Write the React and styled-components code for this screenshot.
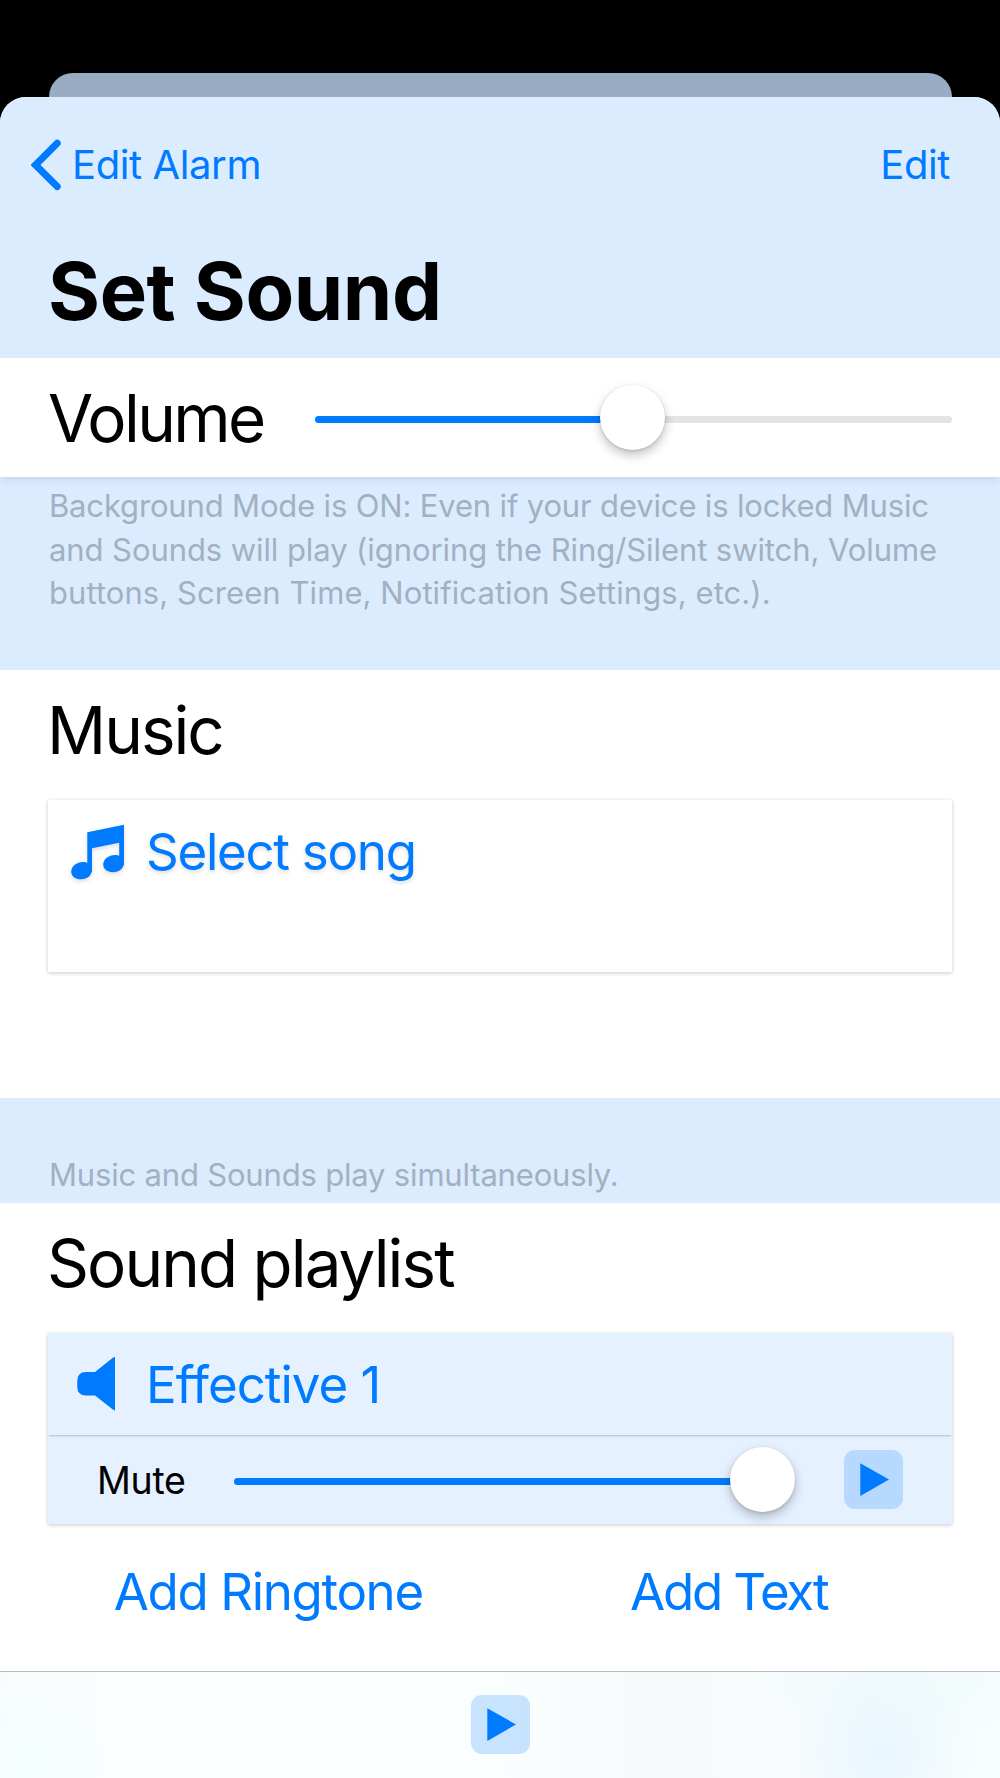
import React from "react";
import styled, { createGlobalStyle, css } from "styled-components";

const GlobalStyle = createGlobalStyle`
  *, *::before, *::after { box-sizing: border-box; }
  body {
    margin: 0;
    background: #000;
    font-family: Inter, "Liberation Sans", sans-serif;
    color: #000;
    -webkit-font-smoothing: antialiased;
  }
  button { font: inherit; border: 0; padding: 0; background: none; color: inherit; }
`;

const BLUE = "#007aff";
const PALE = "#dbecff";

const Screen = styled.div`
  width: 1000px;
  height: 1778px;
  padding-top: 73px;
  display: flex;
  flex-direction: column;
  overflow: hidden;
  background: #000;
`;

const BackSheet = styled.div`
  flex: none;
  height: 24px;
  margin: 0 48.5px;
  border-radius: 24px 24px 0 0;
  background: #99acc4;
`;

const Sheet = styled.main`
  flex: 1;
  display: flex;
  flex-direction: column;
  border-radius: 26px 26px 0 0;
  overflow: hidden;
  background: #fff;
`;

const Header = styled.header`
  position: relative;
  z-index: 1;
  flex: none;
  height: 261px;
  background: ${PALE};
`;

const NavBar = styled.nav`
  height: 135px;
  padding: 0 50px 0 31px;
  display: flex;
  align-items: center;
  justify-content: space-between;
  color: ${BLUE};
`;

const NavButton = styled.button`
  display: flex;
  align-items: center;
  gap: 11px;
  font-size: 40px;
  line-height: 50px;
  letter-spacing: -0.4px;
`;

const PageTitle = styled.h1`
  margin: 12px 0 0;
  padding: 0 48px;
  font-size: 79.5px;
  line-height: 94px;
  font-weight: 700;
  letter-spacing: -0.4px;
`;

const VolumeRow = styled.section`
  flex: none;
  position: relative;
  height: 119px;
  padding: 0 48px;
  display: flex;
  align-items: center;
  justify-content: space-between;
  background: #fff;
  box-shadow: 0 2px 9px rgba(0, 20, 80, 0.11);
`;

const headingText = css`
  margin: 0;
  font-size: 65.5px;
  line-height: 80px;
  font-weight: 400;
  letter-spacing: ${(p) => p.$spacing || "0"};
`;

const RowHeading = styled.h2`
  ${headingText}
  padding-top: 2px;
`;

const SectionHeading = styled.h2`
  ${headingText}
  height: 130px;
  padding: 21px 47px 0;
`;

const Note = styled.p`
  flex: none;
  margin: 0;
  height: ${(p) => p.$height}px;
  padding: ${(p) => (p.$bottom ? "0 48px 7px 49px" : "7px 48px 0 49px")};
  display: flex;
  flex-direction: column;
  justify-content: ${(p) => (p.$bottom ? "flex-end" : "flex-start")};
  background: ${PALE};
  color: #a3b0c1;
  font-size: 31px;
  line-height: 43.5px;
  white-space: nowrap;
`;

const NoteLine = styled.span`
  letter-spacing: ${(p) => p.$spacing || "0"};
`;

const Section = styled.section`
  flex: none;
  height: ${(p) => p.$height}px;
  background: #fff;
`;

const Card = styled.div`
  margin: 0 48px;
  height: ${(p) => p.$height}px;
  background: ${(p) => (p.$tinted ? "#e5f1ff" : "#fff")};
  box-shadow: 0 1px 4px rgba(0, 0, 0, 0.22);
`;

const CardRow = styled.div`
  position: relative;
  height: 102px;
  display: flex;
  align-items: center;
  color: ${BLUE};
  ${(p) => p.$divided && "box-shadow: 0 2px 2px -1px rgba(0, 30, 70, 0.26);"}
  ${(p) => p.$raised && "filter: drop-shadow(0 2px 2px rgba(0, 0, 0, 0.14));"}
`;

const CardLabel = styled.span`
  padding-top: 2px;
  font-size: 51px;
  line-height: 62px;
  letter-spacing: ${(p) => p.$spacing || "0"};
`;

const IconSlot = styled.span`
  flex: none;
  width: 98px;
  height: 102px;
  svg { display: block; }
`;

const ControlRow = styled.div`
  height: 89px;
  padding: 0 49px;
  display: flex;
  align-items: center;
`;

const MuteLabel = styled.span`
  width: 137px;
  padding-top: 2px;
  font-size: 37.5px;
  line-height: 46px;
  letter-spacing: -0.3px;
`;

const SliderBox = styled.div`
  position: relative;
  width: ${(p) => p.$width}px;
  height: 65px;
  display: flex;
  align-items: center;
`;

const Track = styled.div`
  flex: 1;
  height: 7px;
  margin-top: 3px;
  border-radius: 4px;
  background: #e4e4e6;
`;

const Fill = styled.div`
  height: 100%;
  border-radius: 4px;
  background: ${BLUE};
`;

const Thumb = styled.div`
  position: absolute;
  top: 0;
  width: 65px;
  height: 65px;
  border-radius: 50%;
  background: #fff;
  box-shadow: 0 5px 11px rgba(0, 0, 0, 0.24), 0 1px 3px rgba(0, 0, 0, 0.14);
`;

const PlayButton = styled.button`
  width: 59px;
  height: 59px;
  border-radius: 11px;
  display: flex;
  background: rgba(0, 122, 255, 0.2);
  svg { display: block; }
`;

const CardPlayButton = styled(PlayButton)`
  margin-left: auto;
`;

const AddRow = styled.div`
  height: 134px;
  padding: 0 41px 0 38px;
  display: grid;
  grid-template-columns: 1fr 1fr;
  color: ${BLUE};
`;

const AddButton = styled.button`
  padding-top: 2px;
  font-size: 51px;
  line-height: 62px;
  letter-spacing: ${(p) => p.$spacing || "0"};
`;

const Toolbar = styled.footer`
  flex: 1;
  border-top: 1px solid #b9bcbc;
  padding-bottom: 2px;
  display: flex;
  align-items: center;
  justify-content: center;
  background:
    radial-gradient(ellipse 95px 90px at 882px 80px, rgba(230, 246, 255, 0.9), rgba(230, 246, 255, 0)),
    radial-gradient(ellipse 160px 60px at 900px 10px, rgba(236, 250, 252, 0.8), rgba(236, 250, 252, 0)),
    radial-gradient(ellipse 90px 90px at 30px 90px, rgba(244, 255, 255, 0.9), rgba(244, 255, 255, 0)),
    linear-gradient(90deg, #f9fcfc 0, #fbffff 15%, #fafefe 50%, #f7fafa 64%, #f8fbfd 80%, #f8fdfd 100%);
`;

function Slider({ width, value }) {
  const left = (width - 65) * value;
  return (
    <SliderBox $width={width}>
      <Track>
        <Fill style={{ width: left + 32 }} />
      </Track>
      <Thumb style={{ left }} />
    </SliderBox>
  );
}

const PlayIcon = () => (
  <svg width="59" height="59" viewBox="0 0 59 59">
    <path d="M16.3 13.2 45 29.5 16.3 46Z" fill={BLUE} />
  </svg>
);

const BackChevron = () => (
  <svg width="30" height="52" viewBox="0 0 30 52">
    <path d="M26.2 4.2 4.5 26 26.2 47.6" fill="none" stroke={BLUE} strokeWidth="7" strokeLinecap="round" strokeLinejoin="miter" />
  </svg>
);

const NotesIcon = () => (
  <svg width="98" height="102" viewBox="0 0 98 102">
    <g fill={BLUE}>
      <path d="M39.3 32.2 76 24.7V65H71.2V42.8L44 48.3V72H39.3Z" />
      <path d="M76 62.5C76 68.5 71 72.2 65 72.2C59 72.2 55.2 69 55.2 64.6C55.2 59.3 60.5 55 67 55C69 55 70.3 55.4 71.4 56Z" />
      <path d="M44 69.5C44 75.5 39 79.3 33 79.3C27 79.3 23.2 76 23.2 71.7C23.2 66.3 28.5 62 35 62C37 62 38.3 62.4 39.4 63Z" />
    </g>
  </svg>
);

const SpeakerIcon = () => (
  <svg width="98" height="102" viewBox="0 0 98 102">
    <path d="M38 39H47L64.5 25Q66 24 67 24V77.5Q66 77.3 64.5 76.3L47 62.5H38Q29.3 62.5 29.3 54V48Q29.3 39 38 39Z" fill={BLUE} />
  </svg>
);

export default function App() {
  return (
    <>
      <GlobalStyle />
      <Screen>
        <BackSheet />
        <Sheet>
          <Header>
            <NavBar>
              <NavButton>
                <BackChevron />
                Edit Alarm
              </NavButton>
              <NavButton>Edit</NavButton>
            </NavBar>
            <PageTitle>Set Sound</PageTitle>
          </Header>

          <VolumeRow>
            <RowHeading $spacing="-2.6px">Volume</RowHeading>
            <Slider width={637} value={0.498} />
          </VolumeRow>

          <Note $height={193}>
            <NoteLine $spacing="-0.16px">Background Mode is ON: Even if your device is locked Music</NoteLine>
            <NoteLine $spacing="-0.08px">and Sounds will play (ignoring the Ring/Silent switch, Volume</NoteLine>
            <NoteLine $spacing="0.07px">buttons, Screen Time, Notification Settings, etc.).</NoteLine>
          </Note>

          <Section $height={428}>
            <SectionHeading $spacing="-2px">Music</SectionHeading>
            <Card $height={172}>
              <CardRow $raised>
                <IconSlot>
                  <NotesIcon />
                </IconSlot>
                <CardLabel $spacing="-1.27px">Select song</CardLabel>
              </CardRow>
            </Card>
          </Section>

          <Note $height={105} $bottom>
            <NoteLine $spacing="-0.18px">Music and Sounds play simultaneously.</NoteLine>
          </Note>

          <Section $height={468}>
            <SectionHeading $spacing="-1.95px">Sound playlist</SectionHeading>
            <Card $height={191} $tinted>
              <CardRow $divided>
                <IconSlot>
                  <SpeakerIcon />
                </IconSlot>
                <CardLabel $spacing="-1px">Effective 1</CardLabel>
              </CardRow>
              <ControlRow>
                <MuteLabel>Mute</MuteLabel>
                <Slider width={561} value={1} />
                <CardPlayButton aria-label="Play Effective 1">
                  <PlayIcon />
                </CardPlayButton>
              </ControlRow>
            </Card>
            <AddRow>
              <AddButton $spacing="-1.34px">Add Ringtone</AddButton>
              <AddButton $spacing="-2.2px">Add Text</AddButton>
            </AddRow>
          </Section>

          <Toolbar>
            <PlayButton aria-label="Play all">
              <PlayIcon />
            </PlayButton>
          </Toolbar>
        </Sheet>
      </Screen>
    </>
  );
}
